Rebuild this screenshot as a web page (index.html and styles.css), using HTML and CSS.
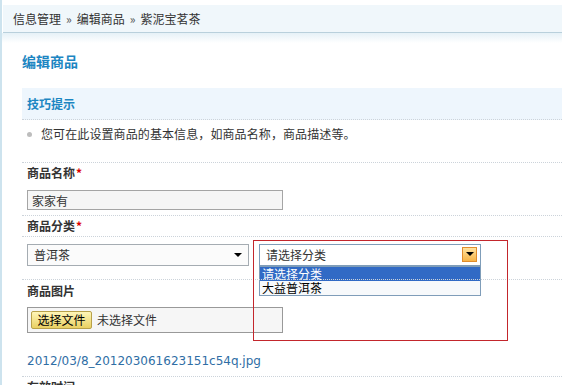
FILE: index.html
```html
<!DOCTYPE html>
<html lang="zh-CN">
<head>
    <meta charset="UTF-8">
    <title>编辑商品</title>
    <link rel="stylesheet" href="styles.css">
</head>
<body>
    <div class="page">
        <div class="crumb">信息管理<span class="sep">&raquo;</span>编辑商品<span class="sep">&raquo;</span>紫泥宝茗茶</div>
        <div class="crumb-shadow"></div>

        <div class="main">
            <h2 class="title">编辑商品</h2>

            <div class="tips">
                <h3>技巧提示</h3>
            </div>
            <ul class="tip-list">
                <li>您可在此设置商品的基本信息，如商品名称，商品描述等。</li>
            </ul>

            <div class="field">
                <div class="label">商品名称<span class="req">*</span></div>
                <input type="text" class="text-input" value="家家有">
            </div>

            <div class="field">
                <div class="label">商品分类<span class="req">*</span></div>
            </div>
            <div class="field select-row">
                <div class="fake-select">
                    <span>普洱茶</span>
                    <span class="arrow"></span>
                </div>
                <div class="xp-select">
                    <span>请选择分类</span>
                    <span class="xp-btn"><span class="arrow"></span></span>
                    <ul class="xp-list">
                        <li class="selected">请选择分类</li>
                        <li>大益普洱茶</li>
                    </ul>
                </div>
                <div class="mark"></div>
            </div>

            <div class="field">
                <div class="label tall">商品图片</div>
                <div class="file-input">
                    <span class="file-btn">选择文件</span>
                    <span>未选择文件</span>
                </div>
                <a class="file-link" href="#">2012/03/8_201203061623151c54q.jpg</a>
            </div>

            <div class="field">
                <div class="label">有效时间</div>
            </div>
        </div>
    </div>
</body>
</html>
```

FILE: styles.css
```css
body {
    margin: 0;
    padding: 0;
    font-family: "Noto Sans CJK SC", "DejaVu Sans", sans-serif;
    font-size: 12px;
    color: #333;
    background-color: #fff;
    overflow: hidden;
}

.page {
    border-left: 2px solid #cde3ee;
    height: 385px;
    padding-top: 5px;
    box-sizing: border-box;
}

.crumb {
    margin-left: 1px;
    height: 27px;
    line-height: 27px;
    padding-left: 10px;
    background-color: #f0f7fb;
    border-bottom: 1px solid #b9d0dc;
}

.crumb .sep {
    margin: 0 5px;
    color: #555;
}

.crumb-shadow {
    height: 10px;
    background: linear-gradient(#e6f1f7, #fff);
}

.main {
    padding-left: 20px;
}

.title {
    margin: 6px 0 0;
    font-size: 14px;
    font-weight: bold;
    color: #1c86c2;
    line-height: 24px;
}

.tips {
    margin-top: 15px;
    height: 31px;
    background-color: #eef6fd;
    border-bottom: 1px dotted #ccd3da;
}

.tips h3 {
    margin: 0;
    padding-left: 5px;
    line-height: 31px;
    font-size: 12px;
    font-weight: bold;
    color: #1c86c2;
}

.tip-list {
    list-style: none;
    margin: 0;
    padding: 4px 0 0 5px;
    height: 38px;
}

.tip-list li {
    line-height: 20px;
    position: relative;
    padding-left: 14px;
    letter-spacing: 0.1px;
}

.tip-list li::before {
    content: "";
    position: absolute;
    left: 0;
    top: 8px;
    width: 5px;
    height: 5px;
    border-radius: 50%;
    background-color: #bdbdbd;
}

.field {
    border-top: 1px dotted #ccd3da;
    padding-left: 5px;
    position: relative;
}

.label {
    font-weight: bold;
    line-height: 20px;
}

.label.tall {
    line-height: 22px;
}

.req {
    color: #d00;
    margin-left: 1px;
}

.text-input {
    display: block;
    box-sizing: border-box;
    width: 256px;
    height: 20px;
    margin: 7px 0 5px;
    padding: 0 4px;
    border: 1px solid #a5a5a5;
    background-color: #f6f6f6;
    font-family: inherit;
    font-size: 12px;
    color: #333;
}

.select-row {
    height: 42px;
}

.fake-select {
    position: absolute;
    left: 5px;
    top: 7px;
    box-sizing: border-box;
    width: 222px;
    height: 22px;
    line-height: 20px;
    padding-left: 6px;
    border: 1px solid #a5acb2;
    background-color: #fbfbfb;
}

.fake-select .arrow {
    position: absolute;
    right: 6px;
    top: 8px;
}

.arrow {
    display: block;
    width: 0;
    height: 0;
    border-left: 4px solid transparent;
    border-right: 4px solid transparent;
    border-top: 4px solid #000;
}

.xp-select {
    position: absolute;
    left: 237px;
    top: 7px;
    box-sizing: border-box;
    width: 222px;
    height: 22px;
    line-height: 20px;
    padding-left: 6px;
    border: 1px solid #7f9db9;
    background-color: #fff;
}

.xp-btn {
    position: absolute;
    right: 3px;
    top: 2px;
    box-sizing: border-box;
    width: 15px;
    height: 15px;
    border: 1px solid #e08c2c;
    background: linear-gradient(#ffe3a0, #f7b447);
}

.xp-btn .arrow {
    margin: 4px 0 0 3px;
}

.xp-list {
    position: absolute;
    left: -1px;
    top: 21px;
    width: 222px;
    box-sizing: border-box;
    margin: 0;
    padding: 0;
    list-style: none;
    border: 1px solid #7f9db9;
    background-color: #f7f9fb;
    font-size: 12px;
}

.xp-list li {
    height: 14px;
    line-height: 14px;
    padding-left: 2px;
    color: #000;
}

.xp-list li.selected {
    background-color: #316ac5;
    color: #fff;
}

.mark {
    position: absolute;
    left: 231px;
    top: 3px;
    width: 253px;
    height: 99px;
    border: 1px solid #c3262c;
    z-index: 2;
}

.file-input {
    box-sizing: border-box;
    width: 256px;
    height: 26px;
    margin-top: 5px;
    padding: 3px 0 0 3px;
    border: 1px solid #999;
    background-color: #f6f6f6;
    display: flex;
    align-items: flex-start;
    gap: 5px;
    line-height: 18px;
}

.file-btn {
    box-sizing: border-box;
    width: 61px;
    height: 18px;
    text-align: center;
    border: 1px solid #b8a14a;
    border-radius: 2px;
    background: linear-gradient(#fff6b8, #e9d062);
    color: #000;
    line-height: 16px;
}

.file-link {
    display: block;
    margin-top: 18px;
    margin-bottom: 5px;
    line-height: 20px;
    font-family: "DejaVu Sans", Verdana, sans-serif;
    font-size: 12px;
    color: #2f6ea5;
    text-decoration: none;
}
```
